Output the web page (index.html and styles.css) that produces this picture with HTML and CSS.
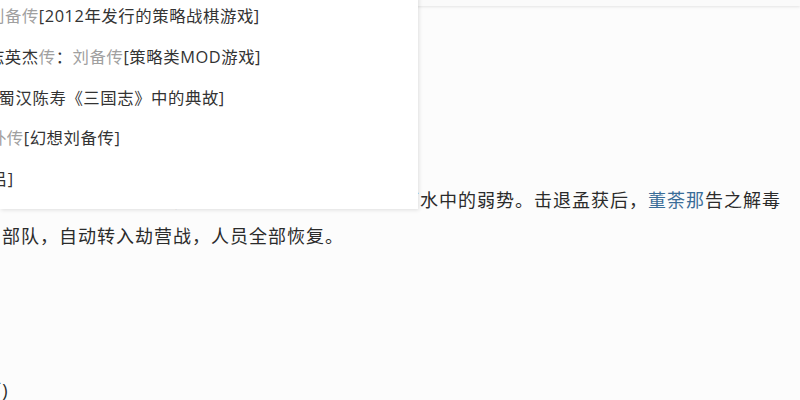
FILE: index.html
```html
<!DOCTYPE html>
<html lang="zh-CN">
<head>
    <meta charset="UTF-8">
    <title>刘备传 攻略</title>
    <link rel="stylesheet" href="styles.css">
</head>
<body>
    <header class="topbar"></header>
    <main class="article">
        <p class="para">蛮王藤甲兵刀枪不入，但我军可以利用藤甲兵在下水中的弱势。击退孟获后，<a class="link" href="#">董荼那</a>告之解毒部队，自动转入劫营战，人员全部恢复。</p>
        <p class="para note">刘备传(下)</p>
    </main>
    <div class="suggest">
        <ul class="suggest-list">
            <li class="item item-1"><span class="kw">刘备传</span>[2012年发行的策略战棋游戏]</li>
            <li class="item item-2">三国志英杰<span class="kw">传</span>：<span class="kw">刘备传</span>[策略类MOD游戏]</li>
            <li class="item item-3"><span class="kw">刘备传</span>[出自蜀汉陈寿《三国志》中的典故]</li>
            <li class="item item-4"><span class="kw">刘备外传</span>[幻想刘备传]</li>
            <li class="item item-5"><span class="kw">刘备传</span>[吕]</li>
        </ul>
    </div>
</body>
</html>
```

FILE: styles.css
```css
body {
    margin: 0;
    height: 400px;
    overflow: hidden;
    background-color: #fcfcfc;
    color: #2b2b2b;
    font-family: "Open Sans", "Noto Sans CJK SC", sans-serif;
    position: relative;
}

/* top navigation strip, only its bottom edge is visible */
.topbar {
    height: 6px;
    background-color: #fafafa;
    box-shadow: 0 1px 3px rgba(0, 0, 0, 0.1);
}

.article {
    width: 790px;
    padding-left: 2px;
}

.para {
    margin: 176px 0 0 0;
    font-size: 18px;
    letter-spacing: 1px;
    line-height: 36px;
}

.link {
    color: #3a6d98;
    text-decoration: none;
}

.note {
    margin-top: 118px;
    margin-left: -82px;
    white-space: nowrap;
}

/* search suggestion dropdown */
.suggest {
    position: absolute;
    z-index: 10;
    left: 0;
    top: -4px;
    width: 418px;
    height: 213px;
    overflow: hidden;
    background-color: #fff;
    box-shadow: 1px 1px 4px rgba(0, 0, 0, 0.12);
}

.suggest-list {
    list-style: none;
    margin: 0;
    padding: 0;
}

.item {
    font-size: 16.4px;
    letter-spacing: 0.55px;
    line-height: 40.75px;
    white-space: nowrap;
    color: #333;
}

.kw {
    color: #a0a0a0;
}

.item-1 { margin-left: -12px; }
.item-2 { margin-left: -46px; }
.item-3 { margin-left: -92px; }
.item-4 { margin-left: -44px; }
.item-5 { margin-left: -66px; }
```
